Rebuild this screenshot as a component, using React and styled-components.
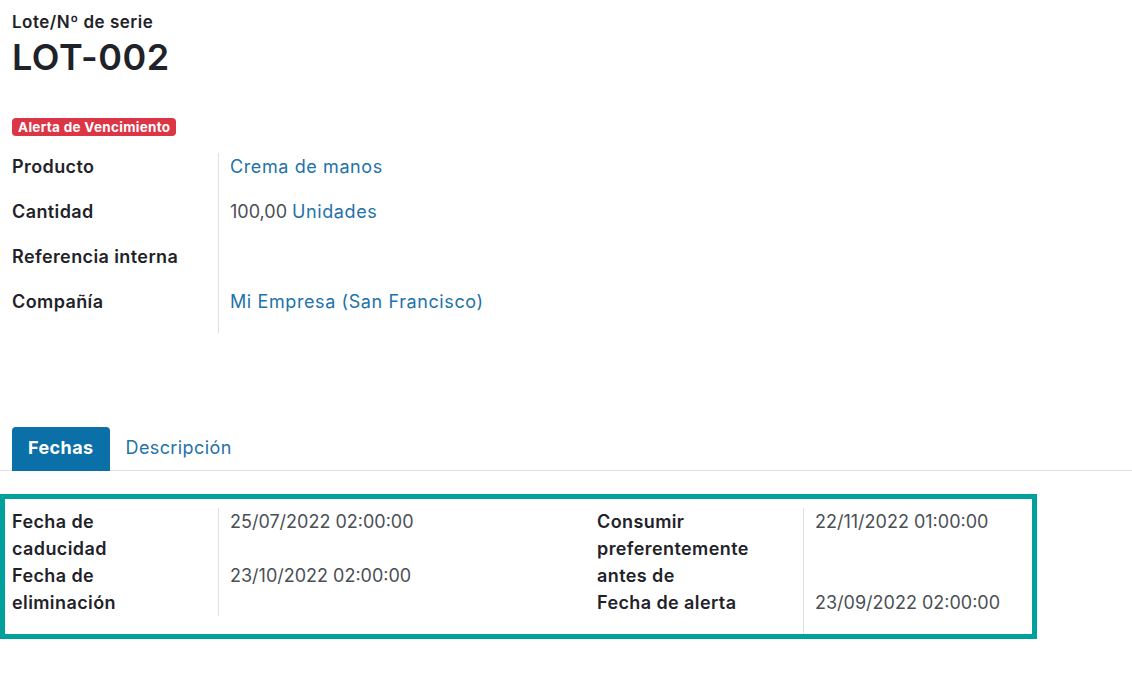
import React from "react";
import styled, { createGlobalStyle } from "styled-components";

const GlobalStyle = createGlobalStyle`
  body {
    margin: 0;
    background: #fff;
    font-family: Inter, "Noto Sans", sans-serif;
    color: #1f2329;
  }
`;

const Sheet = styled.div`
  padding: 12px 0 0 0;
  width: 1132px;
`;

const Header = styled.div`
  padding: 0 12px;
`;

const Subtitle = styled.div`
  font-size: 17px;
  font-weight: 600;
  line-height: 20px;
  letter-spacing: 0.5px;
`;

const Title = styled.h1`
  margin: 4px 0 0;
  font-size: 36px;
  font-weight: 600;
  line-height: 42px;
  letter-spacing: 0.5px;
`;

const Badge = styled.span`
  display: inline-block;
  margin: 40px 0 0 12px;
  padding: 0 6px;
  height: 18px;
  line-height: 18px;
  border-radius: 4px;
  background: #dc3545;
  color: #fff;
  font-size: 13.5px;
  font-weight: 700;
  letter-spacing: 0.3px;
`;

const Group = styled.div`
  display: grid;
  grid-template-columns: 206px 1fr;
  align-content: start;
`;

const Label = styled.div`
  font-size: 18px;
  font-weight: 600;
  line-height: 27px;
  letter-spacing: 0.4px;
  padding-bottom: ${(p) => p.$pb || 0}px;
`;

const Value = styled.div`
  border-left: 1px solid #dee2e6;
  padding-left: 11px;
  padding-bottom: ${(p) => p.$pb || 0}px;
  font-size: 18px;
  line-height: 27px;
  color: #4a4f55;
  display: flex;
  gap: 5px;
  align-items: flex-start;
`;

const Link = styled.span`
  color: #2372a9;
  letter-spacing: 0.6px;
`;

const MainGroup = styled(Group)`
  margin: 17px 12px 0;
  width: 580px;
`;

const Tabs = styled.div`
  display: flex;
  align-items: flex-end;
  margin: 94px 0 0;
  padding-left: 12px;
  border-bottom: 1px solid #dee2e6;
`;

const Tab = styled.div`
  padding: 0 16px;
  height: 44px;
  line-height: 42px;
  font-size: 18px;
  letter-spacing: 0.4px;
  margin-bottom: -1px;
  border-radius: 4px 4px 0 0;
  background: ${(p) => (p.$active ? "#0b6fa8" : "transparent")};
  color: ${(p) => (p.$active ? "#fff" : "#2372a9")};
  font-weight: ${(p) => (p.$active ? 700 : 400)};
`;

const DatesBox = styled.div`
  box-sizing: border-box;
  margin-top: 23px;
  width: 1037px;
  border: 5px solid #00a09d;
  padding: 9px 7px 0;
  display: grid;
  grid-template-columns: 585px 1fr;
`;

export default function App() {
  return (
    <Sheet>
      <GlobalStyle />
      <Header>
        <Subtitle>Lote/Nº de serie</Subtitle>
        <Title>LOT-002</Title>
      </Header>
      <Badge>Alerta de Vencimiento</Badge>
      <MainGroup>
        <Label $pb={18}>Producto</Label>
        <Value $pb={18}>
          <Link>Crema de manos</Link>
        </Value>
        <Label $pb={18}>Cantidad</Label>
        <Value $pb={18}>
          100,00 <Link>Unidades</Link>
        </Value>
        <Label $pb={18}>Referencia interna</Label>
        <Value $pb={18} />
        <Label $pb={18}>Compañía</Label>
        <Value $pb={18}>
          <Link>Mi Empresa (San Francisco)</Link>
        </Value>
      </MainGroup>
      <Tabs>
        <Tab $active>Fechas</Tab>
        <Tab>Descripción</Tab>
      </Tabs>
      <DatesBox>
        <Group>
          <Label>
            Fecha de
            <br />
            caducidad
          </Label>
          <Value>25/07/2022 02:00:00</Value>
          <Label>
            Fecha de
            <br />
            eliminación
          </Label>
          <Value>23/10/2022 02:00:00</Value>
        </Group>
        <Group>
          <Label>
            Consumir
            <br />
            preferentemente
            <br />
            antes de
          </Label>
          <Value>22/11/2022 01:00:00</Value>
          <Label $pb={18}>Fecha de alerta</Label>
          <Value $pb={18}>23/09/2022 02:00:00</Value>
        </Group>
      </DatesBox>
    </Sheet>
  );
}
